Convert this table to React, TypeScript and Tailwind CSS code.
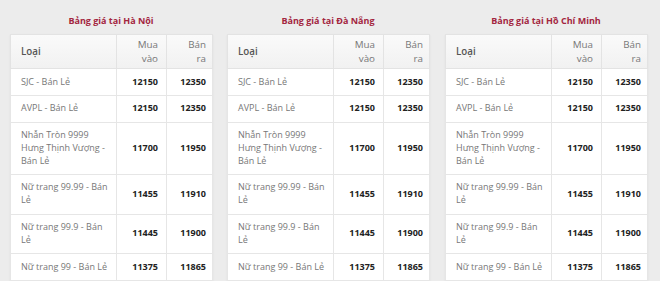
import React from "react";

type Row = { name: string; buy: string; sell: string };

const rows: Row[] = [
  { name: "SJC - Bán Lẻ", buy: "12150", sell: "12350" },
  { name: "AVPL - Bán Lẻ", buy: "12150", sell: "12350" },
  { name: "Nhẫn Tròn 9999 Hưng Thịnh Vượng - Bán Lẻ", buy: "11700", sell: "11950" },
  { name: "Nữ trang 99.99 - Bán Lẻ", buy: "11455", sell: "11910" },
  { name: "Nữ trang 99.9 - Bán Lẻ", buy: "11445", sell: "11900" },
  { name: "Nữ trang 99 - Bán Lẻ", buy: "11375", sell: "11865" },
];

function PriceTable({ title }: { title: string }) {
  return (
    <div className="w-[202px] shrink-0">
      <div className="h-[34px] flex items-end justify-center pb-[7px] text-[9px] leading-[12px] font-bold text-[#a3263f]">
        {title}
      </div>
      <table className="w-[202px] table-fixed border-collapse bg-white text-[9px] leading-[12.8px] shadow-[0_1px_2px_rgba(0,0,0,0.06)]">
        <colgroup>
          <col className="w-[106px]" />
          <col className="w-[50px]" />
          <col className="w-[46px]" />
        </colgroup>
        <thead>
          <tr className="bg-gradient-to-b from-[#fafafa] to-[#f1f1f1] h-[33px] text-[9.8px] leading-[13.5px]">
            <th className="text-left font-semibold text-[#555] px-[10px] py-[3px] border border-[#e3e3e3]">
              Loại
            </th>
            <th className="text-right font-normal text-[#777] pl-[6px] pr-[8px] py-[3px] border border-[#e3e3e3]">
              Mua vào
            </th>
            <th className="text-right font-normal text-[#777] pl-[14px] pr-[6px] py-[3px] border border-[#e3e3e3]">
              Bán ra
            </th>
          </tr>
        </thead>
        <tbody>
          {rows.map((r) => (
            <tr key={r.name}>
              <td className="text-left text-[#777] pl-[10px] pr-[6px] py-[6.5px] border border-[#e6e6e6]">
                {r.name}
              </td>
              <td className="text-right font-bold text-[#222] pl-[4px] pr-[8px] py-[6.5px] border border-[#e6e6e6]">
                {r.buy}
              </td>
              <td className="text-right font-bold text-[#222] pl-[4px] pr-[6px] py-[6.5px] border border-[#e6e6e6]">
                {r.sell}
              </td>
            </tr>
          ))}
        </tbody>
      </table>
    </div>
  );
}

export default function App() {
  return (
    <div
      className="w-[660px] h-[281px] overflow-hidden bg-[#ececec] flex pl-[10px]"
      style={{ fontFamily: '"Open Sans", "Noto Sans", sans-serif' }}
    >
      <PriceTable title="Bảng giá tại Hà Nội" />
      <div className="ml-[15px]">
        <PriceTable title="Bảng giá tại Đà Nẵng" />
      </div>
      <div className="ml-[16px]">
        <PriceTable title="Bảng giá tại Hồ Chí Minh" />
      </div>
    </div>
  );
}
